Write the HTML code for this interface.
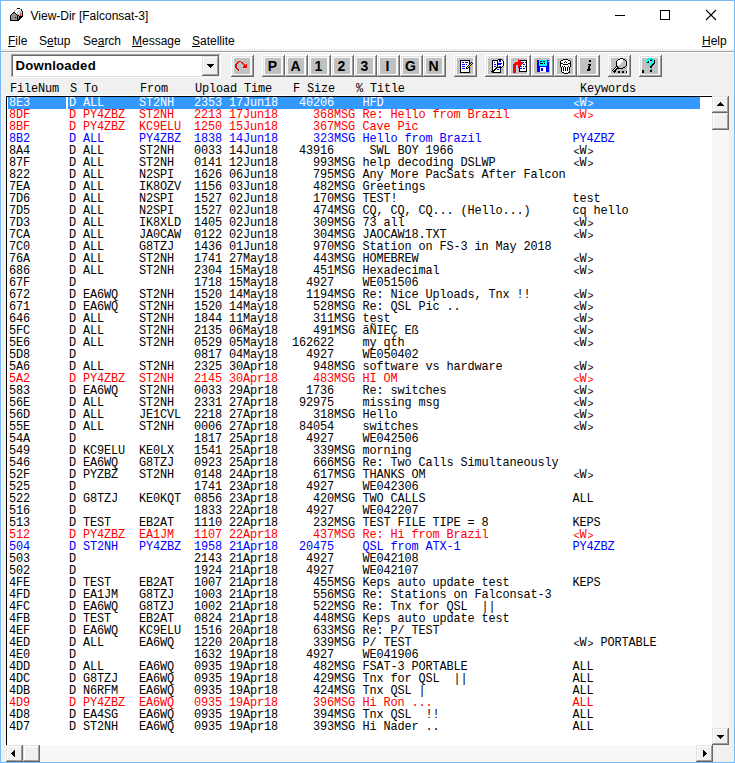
<!DOCTYPE html><html><head><meta charset="utf-8"><style>
*{box-sizing:border-box}
body{margin:0;width:735px;height:763px;position:relative;overflow:hidden;background:#F0F0F0;font-family:"Liberation Sans",sans-serif}
.a{position:absolute}
.mono{font-family:"Liberation Mono",monospace;font-size:11.9px;letter-spacing:-0.14px;line-height:12px;white-space:pre}
.row{position:absolute;left:0;width:705px;height:12px}
.row span{position:absolute;top:0}
.K{color:#000}.R{color:#FF0000}.B{color:#0000FF}
.S{color:#fff}
.ab{font-style:normal;display:inline-block;width:7px;font-size:10px;vertical-align:0px;letter-spacing:0;text-align:center;position:relative;left:0.5px;top:1px}
.menu{position:absolute;top:34px;font-size:12px;line-height:15px;color:#000}
.menu u{text-decoration:underline;text-decoration-thickness:1px;text-underline-offset:1px}
.tb{position:absolute;top:55px;width:23px;height:22px}
.tbl{position:absolute;left:0;top:0;width:21px;height:22px;text-align:center;font:bold 14px/22px "Liberation Sans",sans-serif;color:#000}
.dither{background-color:#F0F0F0;background-image:conic-gradient(#fff 25%,#F0F0F0 0 50%,#fff 0 75%,#F0F0F0 0);background-size:2px 2px}
</style></head><body><div class="a" style="left:0;top:0;width:735px;height:49px;background:#fff"></div>
<div class="a" style="left:1px;top:51px;width:733px;height:1px;background:#A0A0A0"></div>
<div class="a" style="left:1px;top:52px;width:733px;height:1px;background:#fff"></div>
<div class="a" style="left:0;top:0;width:735px;height:763px;border:1px solid #7BB8F8"></div>
<div class="a" style="left:30.5px;top:9px;font-size:12px;line-height:15px;color:#000;white-space:pre">View-Dir [Falconsat-3]</div>
<svg class="a" style="left:8px;top:6px" width="18" height="18" shape-rendering="crispEdges"><path fill="#000" d="M9 2h3v1h-3z"/><path fill="#A8A8A8" d="M8 3h1v1h-1z"/><path fill="#fff" d="M9 3h3v1h-3z"/><path fill="#C0C0C0" d="M12 3h1v1h-1z"/><path fill="#000" d="M13 3h1v1h-1z"/><path fill="#A8A8A8" d="M7 4h1v1h-1z"/><path fill="#fff" d="M8 4h3v1h-3z"/><path fill="#C0C0C0" d="M11 4h1v1h-1z"/><path fill="#fff" d="M12 4h1v1h-1z"/><path fill="#000" d="M13 4h1v1h-1z"/><path fill="#A8A8A8" d="M6 5h1v1h-1z"/><path fill="#fff" d="M7 5h3v1h-3z"/><path fill="#C0C0C0" d="M10 5h1v1h-1z"/><path fill="#fff" d="M11 5h1v1h-1z"/><path fill="#C0C0C0" d="M12 5h2v1h-2z"/><path fill="#000" d="M14 5h1v1h-1zM5 6h2v1h-2z"/><path fill="#fff" d="M7 6h2v1h-2z"/><path fill="#C0C0C0" d="M9 6h1v1h-1z"/><path fill="#fff" d="M10 6h1v1h-1z"/><path fill="#C0C0C0" d="M11 6h3v1h-3z"/><path fill="#000" d="M14 6h1v1h-1zM4 7h1v1h-1z"/><path fill="#909090" d="M5 7h2v1h-2z"/><path fill="#000" d="M7 7h1v1h-1z"/><path fill="#fff" d="M8 7h1v1h-1z"/><path fill="#C0C0C0" d="M9 7h1v1h-1z"/><path fill="#fff" d="M10 7h2v1h-2z"/><path fill="#00A0A0" d="M12 7h1v1h-1z"/><path fill="#C0C0C0" d="M13 7h1v1h-1z"/><path fill="#000" d="M14 7h1v1h-1zM3 8h1v1h-1z"/><path fill="#909090" d="M4 8h4v1h-4z"/><path fill="#000" d="M8 8h1v1h-1z"/><path fill="#C0C0C0" d="M9 8h2v1h-2zM11 8h1v1h-1z"/><path fill="#f00" d="M12 8h1v1h-1z"/><path fill="#C0C0C0" d="M13 8h1v1h-1z"/><path fill="#000" d="M14 8h1v1h-1zM2 9h1v1h-1z"/><path fill="#909090" d="M3 9h6v1h-6z"/><path fill="#000" d="M9 9h2v1h-2z"/><path fill="#C0C0C0" d="M11 9h1v1h-1z"/><path fill="#f00" d="M12 9h1v1h-1z"/><path fill="#C0C0C0" d="M13 9h1v1h-1z"/><path fill="#000" d="M14 9h1v1h-1zM2 10h1v1h-1z"/><path fill="#909090" d="M3 10h6v1h-6z"/><path fill="#000" d="M9 10h1v1h-1z"/><path fill="#909090" d="M10 10h1v1h-1z"/><path fill="#000" d="M11 10h1v1h-1zM12 10h3v1h-3zM2 11h1v1h-1z"/><path fill="#909090" d="M3 11h4v1h-4z"/><path fill="#000" d="M7 11h1v1h-1z"/><path fill="#909090" d="M8 11h1v1h-1z"/><path fill="#000" d="M9 11h1v1h-1z"/><path fill="#909090" d="M10 11h1v1h-1z"/><path fill="#000" d="M11 11h3v1h-3zM2 12h1v1h-1z"/><path fill="#909090" d="M3 12h6v1h-6z"/><path fill="#000" d="M9 12h1v1h-1z"/><path fill="#909090" d="M10 12h1v1h-1z"/><path fill="#000" d="M11 12h2v1h-2zM2 13h1v1h-1z"/><path fill="#909090" d="M3 13h6v1h-6z"/><path fill="#000" d="M9 13h3v1h-3zM2 14h9v1h-9z"/></svg>
<div class="a" style="left:615px;top:15px;width:10px;height:1px;background:#000"></div>
<div class="a" style="left:660px;top:10px;width:10px;height:10px;border:1px solid #000"></div>
<svg class="a" style="left:705px;top:9px" width="12" height="12" viewBox="0 0 12 12"><path d="M1 1L11 11M11 1L1 11" stroke="#000" stroke-width="1.1"/></svg>
<div class="menu" style="left:8px"><u>F</u>ile</div>
<div class="menu" style="left:39px">S<u>e</u>tup</div>
<div class="menu" style="left:83px">Se<u>a</u>rch</div>
<div class="menu" style="left:132px"><u>M</u>essage</div>
<div class="menu" style="left:192px"><u>S</u>atellite</div>
<div class="menu" style="left:702px"><u>H</u>elp</div>
<div class="a" style="left:11px;top:54px;width:210px;height:24px;background:#fff"></div>
<div class="a" style="left:11px;top:54px;width:209px;height:23px;background:#A0A0A0"></div>
<div class="a" style="left:12px;top:55px;width:208px;height:22px;background:#E3E3E3"></div>
<div class="a" style="left:12px;top:55px;width:207px;height:21px;background:#696969"></div>
<div class="a" style="left:13px;top:56px;width:206px;height:20px;background:#fff"></div>
<div style="position:absolute;left:202px;top:56px;width:17px;height:20px;background:#696969"><div style="position:absolute;left:0;top:0;width:16px;height:19px;background:#E3E3E3"></div><div style="position:absolute;left:1px;top:1px;width:15px;height:18px;background:#A0A0A0"></div><div style="position:absolute;left:1px;top:1px;width:14px;height:17px;background:#FFFFFF"></div><div style="position:absolute;left:2px;top:2px;width:13px;height:16px;background:#F0F0F0"></div></div>
<svg class="a" style="left:207px;top:64px" width="7" height="4" shape-rendering="crispEdges"><path d="M0 0h7v1H0zM1 1h5v1H1zM2 2h3v1H2zM3 3h1v1H3z"/></svg>
<div class="a" style="left:15.5px;top:58px;font:bold 13.2px/16px 'Liberation Sans',sans-serif;letter-spacing:0.2px;color:#000">Downloaded</div>
<div class="tb" style="left:231px"><div class="a" style="left:0px;top:0px;width:23px;height:22px;background:#696969"></div><div class="a" style="left:0px;top:0px;width:22px;height:21px;background:#FFFFFF"></div><div class="a" style="left:1px;top:1px;width:21px;height:20px;background:#A0A0A0"></div><div class="a" style="left:1px;top:1px;width:20px;height:19px;background:#E3E3E3"></div><div class="a" style="left:2px;top:2px;width:19px;height:18px;background:#F8F8F8"></div><div class="a" style="left:3px;top:3px;width:16px;height:16px;background:#C0C0C0"></div><svg class="a" style="left:0px;top:0px" width="23" height="22" shape-rendering="crispEdges"><path fill="#f00" d="M7 6h3v1h-3zM6 7h2v1h-2zM10 7h2v1h-2zM5 8h2v1h-2zM11 8h2v1h-2zM4 9h2v1h-2zM12 9h2v1h-2zM15 9h1v1h-1zM4 10h2v1h-2zM13 10h3v1h-3zM4 11h2v1h-2zM12 11h4v1h-4zM4 12h2v1h-2zM12 12h4v1h-4zM5 13h2v1h-2zM6 14h2v1h-2zM7 15h1v1h-1z"/><path fill="#B4D6D6" d="M7 5h3v1h-3zM6 6h1v1h-1zM10 6h1v1h-1zM5 7h1v1h-1zM8 7h2v1h-2zM12 7h1v1h-1zM4 8h1v1h-1zM7 8h1v1h-1zM10 8h1v1h-1zM13 8h1v1h-1zM3 9h1v1h-1zM6 9h1v1h-1zM11 9h1v1h-1zM14 9h1v1h-1zM16 9h1v1h-1zM3 10h1v1h-1zM6 10h1v1h-1zM12 10h1v1h-1zM16 10h1v1h-1zM3 11h1v1h-1zM6 11h1v1h-1zM16 11h1v1h-1zM3 12h1v1h-1zM6 12h1v1h-1zM16 12h1v1h-1zM4 13h1v1h-1zM7 13h1v1h-1zM12 13h4v1h-4zM5 14h1v1h-1zM8 14h1v1h-1zM6 15h1v1h-1zM8 15h1v1h-1zM7 16h1v1h-1z"/></svg></div>
<div class="tb" style="left:262px"><div class="a" style="left:0px;top:0px;width:23px;height:22px;background:#696969"></div><div class="a" style="left:0px;top:0px;width:22px;height:21px;background:#FFFFFF"></div><div class="a" style="left:1px;top:1px;width:21px;height:20px;background:#A0A0A0"></div><div class="a" style="left:1px;top:1px;width:20px;height:19px;background:#E3E3E3"></div><div class="a" style="left:2px;top:2px;width:19px;height:18px;background:#F8F8F8"></div><div class="a" style="left:3px;top:3px;width:16px;height:16px;background:#C0C0C0"></div><div class="tbl">P</div></div>
<div class="tb" style="left:285px"><div class="a" style="left:0px;top:0px;width:23px;height:22px;background:#696969"></div><div class="a" style="left:0px;top:0px;width:22px;height:21px;background:#FFFFFF"></div><div class="a" style="left:1px;top:1px;width:21px;height:20px;background:#A0A0A0"></div><div class="a" style="left:1px;top:1px;width:20px;height:19px;background:#E3E3E3"></div><div class="a" style="left:2px;top:2px;width:19px;height:18px;background:#F8F8F8"></div><div class="a" style="left:3px;top:3px;width:16px;height:16px;background:#C0C0C0"></div><div class="tbl">A</div></div>
<div class="tb" style="left:308px"><div class="a" style="left:0px;top:0px;width:23px;height:22px;background:#696969"></div><div class="a" style="left:0px;top:0px;width:22px;height:21px;background:#FFFFFF"></div><div class="a" style="left:1px;top:1px;width:21px;height:20px;background:#A0A0A0"></div><div class="a" style="left:1px;top:1px;width:20px;height:19px;background:#E3E3E3"></div><div class="a" style="left:2px;top:2px;width:19px;height:18px;background:#F8F8F8"></div><div class="a" style="left:3px;top:3px;width:16px;height:16px;background:#C0C0C0"></div><div class="tbl">1</div></div>
<div class="tb" style="left:331px"><div class="a" style="left:0px;top:0px;width:23px;height:22px;background:#696969"></div><div class="a" style="left:0px;top:0px;width:22px;height:21px;background:#FFFFFF"></div><div class="a" style="left:1px;top:1px;width:21px;height:20px;background:#A0A0A0"></div><div class="a" style="left:1px;top:1px;width:20px;height:19px;background:#E3E3E3"></div><div class="a" style="left:2px;top:2px;width:19px;height:18px;background:#F8F8F8"></div><div class="a" style="left:3px;top:3px;width:16px;height:16px;background:#C0C0C0"></div><div class="tbl">2</div></div>
<div class="tb" style="left:354px"><div class="a" style="left:0px;top:0px;width:23px;height:22px;background:#696969"></div><div class="a" style="left:0px;top:0px;width:22px;height:21px;background:#FFFFFF"></div><div class="a" style="left:1px;top:1px;width:21px;height:20px;background:#A0A0A0"></div><div class="a" style="left:1px;top:1px;width:20px;height:19px;background:#E3E3E3"></div><div class="a" style="left:2px;top:2px;width:19px;height:18px;background:#F8F8F8"></div><div class="a" style="left:3px;top:3px;width:16px;height:16px;background:#C0C0C0"></div><div class="tbl">3</div></div>
<div class="tb" style="left:377px"><div class="a" style="left:0px;top:0px;width:23px;height:22px;background:#696969"></div><div class="a" style="left:0px;top:0px;width:22px;height:21px;background:#FFFFFF"></div><div class="a" style="left:1px;top:1px;width:21px;height:20px;background:#A0A0A0"></div><div class="a" style="left:1px;top:1px;width:20px;height:19px;background:#E3E3E3"></div><div class="a" style="left:2px;top:2px;width:19px;height:18px;background:#F8F8F8"></div><div class="a" style="left:3px;top:3px;width:16px;height:16px;background:#C0C0C0"></div><div class="tbl">I</div></div>
<div class="tb" style="left:400px"><div class="a" style="left:0px;top:0px;width:23px;height:22px;background:#696969"></div><div class="a" style="left:0px;top:0px;width:22px;height:21px;background:#FFFFFF"></div><div class="a" style="left:1px;top:1px;width:21px;height:20px;background:#A0A0A0"></div><div class="a" style="left:1px;top:1px;width:20px;height:19px;background:#E3E3E3"></div><div class="a" style="left:2px;top:2px;width:19px;height:18px;background:#F8F8F8"></div><div class="a" style="left:3px;top:3px;width:16px;height:16px;background:#C0C0C0"></div><div class="tbl">G</div></div>
<div class="tb" style="left:423px"><div class="a" style="left:0px;top:0px;width:23px;height:22px;background:#696969"></div><div class="a" style="left:0px;top:0px;width:22px;height:21px;background:#FFFFFF"></div><div class="a" style="left:1px;top:1px;width:21px;height:20px;background:#A0A0A0"></div><div class="a" style="left:1px;top:1px;width:20px;height:19px;background:#E3E3E3"></div><div class="a" style="left:2px;top:2px;width:19px;height:18px;background:#F8F8F8"></div><div class="a" style="left:3px;top:3px;width:16px;height:16px;background:#C0C0C0"></div><div class="tbl">N</div></div>
<div class="tb" style="left:454px"><div class="a" style="left:0px;top:0px;width:23px;height:22px;background:#696969"></div><div class="a" style="left:0px;top:0px;width:22px;height:21px;background:#FFFFFF"></div><div class="a" style="left:1px;top:1px;width:21px;height:20px;background:#A0A0A0"></div><div class="a" style="left:1px;top:1px;width:20px;height:19px;background:#E3E3E3"></div><div class="a" style="left:2px;top:2px;width:19px;height:18px;background:#F8F8F8"></div><div class="a" style="left:3px;top:3px;width:16px;height:16px;background:#C0C0C0"></div><svg class="a" style="left:0px;top:0px" width="23" height="22" shape-rendering="crispEdges"><path fill="#000" d="M6 5h10v1h-10zM6 6h1v11h-1z"/><path fill="#fff" d="M7 6h8v11h-8z"/><path fill="#000" d="M15 6h1v11h-1zM6 17h10v1h-10z"/><path fill="#00f" d="M8 7h2v1h-2zM11 7h3v1h-3zM8 9h3v1h-3zM12 9h1v1h-1zM8 11h3v1h-3zM8 13h3v1h-3z"/><path fill="#000" d="M17 7h1v1h-1zM16 8h1v1h-1z"/><path fill="#ff0" d="M17 8h1v1h-1z"/><path fill="#000" d="M18 8h1v1h-1zM15 9h1v1h-1z"/><path fill="#ff0" d="M16 9h1v1h-1z"/><path fill="#000" d="M17 9h1v1h-1zM14 10h1v1h-1z"/><path fill="#ff0" d="M15 10h1v1h-1z"/><path fill="#000" d="M16 10h1v1h-1zM13 11h1v1h-1z"/><path fill="#ff0" d="M14 11h1v1h-1z"/><path fill="#000" d="M15 11h1v1h-1zM12 12h1v1h-1z"/><path fill="#ff0" d="M13 12h1v1h-1z"/><path fill="#000" d="M14 12h1v1h-1zM12 13h2v1h-2z"/></svg></div>
<div class="tb" style="left:485px"><div class="a" style="left:0px;top:0px;width:23px;height:22px;background:#696969"></div><div class="a" style="left:0px;top:0px;width:22px;height:21px;background:#FFFFFF"></div><div class="a" style="left:1px;top:1px;width:21px;height:20px;background:#A0A0A0"></div><div class="a" style="left:1px;top:1px;width:20px;height:19px;background:#E3E3E3"></div><div class="a" style="left:2px;top:2px;width:19px;height:18px;background:#F8F8F8"></div><div class="a" style="left:3px;top:3px;width:16px;height:16px;background:#C0C0C0"></div><svg class="a" style="left:0px;top:0px" width="23" height="22" shape-rendering="crispEdges"><path fill="#000" d="M13 4h4v1h-4zM7 5h6v1h-6z"/><path fill="#fff" d="M13 5h1v1h-1z"/><path fill="#00f" d="M14 5h2v1h-2z"/><path fill="#fff" d="M16 5h1v1h-1z"/><path fill="#000" d="M17 5h1v1h-1zM7 6h1v1h-1z"/><path fill="#fff" d="M8 6h4v1h-4z"/><path fill="#000" d="M12 6h1v1h-1z"/><path fill="#fff" d="M13 6h1v1h-1z"/><path fill="#00f" d="M14 6h2v1h-2z"/><path fill="#fff" d="M16 6h2v1h-2z"/><path fill="#000" d="M18 6h1v1h-1zM7 7h1v1h-1z"/><path fill="#fff" d="M8 7h1v1h-1z"/><path fill="#00f" d="M9 7h1v1h-1z"/><path fill="#fff" d="M10 7h2v1h-2z"/><path fill="#000" d="M12 7h1v1h-1z"/><path fill="#fff" d="M13 7h5v1h-5z"/><path fill="#000" d="M18 7h1v1h-1zM7 8h1v1h-1z"/><path fill="#fff" d="M8 8h4v1h-4z"/><path fill="#000" d="M12 8h1v1h-1z"/><path fill="#00f" d="M13 8h4v1h-4z"/><path fill="#fff" d="M17 8h1v1h-1z"/><path fill="#000" d="M18 8h1v1h-1zM7 9h1v1h-1z"/><path fill="#fff" d="M8 9h1v1h-1z"/><path fill="#00f" d="M9 9h2v1h-2z"/><path fill="#fff" d="M11 9h1v1h-1z"/><path fill="#000" d="M12 9h1v1h-1z"/><path fill="#00f" d="M13 9h3v1h-3z"/><path fill="#fff" d="M16 9h2v1h-2z"/><path fill="#000" d="M18 9h1v1h-1zM7 10h1v1h-1z"/><path fill="#fff" d="M8 10h4v1h-4z"/><path fill="#000" d="M12 10h1v1h-1z"/><path fill="#fff" d="M13 10h5v1h-5z"/><path fill="#000" d="M18 10h1v1h-1zM7 11h1v1h-1z"/><path fill="#fff" d="M8 11h1v1h-1z"/><path fill="#00f" d="M9 11h2v1h-2z"/><path fill="#fff" d="M11 11h1v1h-1z"/><path fill="#000" d="M12 11h1v1h-1z"/><path fill="#fff" d="M13 11h1v1h-1z"/><path fill="#00f" d="M14 11h2v1h-2z"/><path fill="#fff" d="M16 11h1v1h-1z"/><path fill="#000" d="M17 11h1v1h-1zM7 12h1v1h-1z"/><path fill="#fff" d="M8 12h3v1h-3z"/><path fill="#000" d="M11 12h2v1h-2zM13 12h4v1h-4zM7 13h1v1h-1z"/><path fill="#fff" d="M8 13h2v1h-2z"/><path fill="#000" d="M10 13h2v1h-2z"/><path fill="#fff" d="M12 13h1v1h-1zM13 13h2v1h-2z"/><path fill="#000" d="M15 13h1v1h-1zM7 14h1v1h-1z"/><path fill="#fff" d="M8 14h1v1h-1z"/><path fill="#000" d="M9 14h2v1h-2z"/><path fill="#fff" d="M11 14h1v1h-1z"/><path fill="#00f" d="M12 14h2v1h-2z"/><path fill="#fff" d="M14 14h1v1h-1z"/><path fill="#000" d="M15 14h1v1h-1zM7 15h1v1h-1zM8 15h2v1h-2z"/><path fill="#fff" d="M10 15h5v1h-5z"/><path fill="#000" d="M15 15h1v1h-1zM6 16h3v1h-3z"/><path fill="#fff" d="M9 16h6v1h-6z"/><path fill="#000" d="M15 16h1v1h-1zM7 17h9v1h-9z"/></svg></div>
<div class="tb" style="left:508px"><div class="a" style="left:0px;top:0px;width:23px;height:22px;background:#696969"></div><div class="a" style="left:0px;top:0px;width:22px;height:21px;background:#FFFFFF"></div><div class="a" style="left:1px;top:1px;width:21px;height:20px;background:#A0A0A0"></div><div class="a" style="left:1px;top:1px;width:20px;height:19px;background:#E3E3E3"></div><div class="a" style="left:2px;top:2px;width:19px;height:18px;background:#F8F8F8"></div><div class="a" style="left:3px;top:3px;width:16px;height:16px;background:#C0C0C0"></div><svg class="a" style="left:0px;top:0px" width="23" height="22" shape-rendering="crispEdges"><path fill="#000" d="M11 5h8v1h-8zM11 6h1v10h-1z"/><path fill="#fff" d="M12 6h6v10h-6z"/><path fill="#000" d="M18 6h1v10h-1zM11 16h8v1h-8z"/><path fill="#00f" d="M14 7h2v1h-2zM17 7h1v1h-1zM15 9h2v1h-2zM12 11h2v1h-2zM15 11h1v1h-1zM17 11h1v1h-1zM12 13h2v1h-2zM15 13h2v1h-2z"/><path fill="#f00" d="M10 4h1v1h-1zM10 5h2v1h-2zM10 6h3v1h-3zM7 7h7v1h-7zM6 8h9v1h-9zM5 9h9v1h-9zM5 10h3v1h-3zM10 10h3v1h-3zM5 11h3v1h-3zM10 11h2v1h-2zM5 12h3v1h-3zM10 12h1v1h-1zM5 13h3v5h-3z"/><path fill="#B4D6D6" d="M10 3h1v1h-1zM9 4h1v1h-1zM11 4h1v1h-1zM6 6h4v1h-4zM5 7h2v1h-2zM4 8h2v1h-2zM4 9h1v9h-1zM8 10h1v8h-1z"/></svg></div>
<div class="tb" style="left:531px"><div class="a" style="left:0px;top:0px;width:23px;height:22px;background:#696969"></div><div class="a" style="left:0px;top:0px;width:22px;height:21px;background:#FFFFFF"></div><div class="a" style="left:1px;top:1px;width:21px;height:20px;background:#A0A0A0"></div><div class="a" style="left:1px;top:1px;width:20px;height:19px;background:#E3E3E3"></div><div class="a" style="left:2px;top:2px;width:19px;height:18px;background:#F8F8F8"></div><div class="a" style="left:3px;top:3px;width:16px;height:16px;background:#C0C0C0"></div><svg class="a" style="left:0px;top:0px" width="23" height="22" shape-rendering="crispEdges"><path fill="#00f" d="M6 5h12v12h-12z"/><path fill="#0ff" d="M8 5h8v6h-8z"/><path fill="#000" d="M9 6h2v1h-2zM12 6h2v1h-2z"/><path fill="#C0C0C0" d="M17 6h1v1h-1z"/><path fill="#000" d="M9 8h3v1h-3zM13 8h1v1h-1z"/><path fill="#fff" d="M9 12h6v5h-6z"/><path fill="#00f" d="M10 13h2v3h-2z"/></svg></div>
<div class="tb" style="left:554px"><div class="a" style="left:0px;top:0px;width:23px;height:22px;background:#696969"></div><div class="a" style="left:0px;top:0px;width:22px;height:21px;background:#FFFFFF"></div><div class="a" style="left:1px;top:1px;width:21px;height:20px;background:#A0A0A0"></div><div class="a" style="left:1px;top:1px;width:20px;height:19px;background:#E3E3E3"></div><div class="a" style="left:2px;top:2px;width:19px;height:18px;background:#F8F8F8"></div><div class="a" style="left:3px;top:3px;width:16px;height:16px;background:#C0C0C0"></div><svg class="a" style="left:0px;top:0px" width="23" height="22" shape-rendering="crispEdges"><path fill="#000" d="M9 4h5v1h-5zM7 5h2v1h-2z"/><path fill="#fff" d="M9 5h5v1h-5z"/><path fill="#000" d="M14 5h2v1h-2zM6 6h1v1h-1z"/><path fill="#fff" d="M7 6h4v1h-4z"/><path fill="#000" d="M11 6h1v1h-1z"/><path fill="#fff" d="M12 6h4v1h-4z"/><path fill="#000" d="M16 6h1v1h-1zM6 7h1v1h-1z"/><path fill="#fff" d="M7 7h3v1h-3z"/><path fill="#000" d="M10 7h1v1h-1z"/><path fill="#fff" d="M11 7h1v1h-1z"/><path fill="#000" d="M12 7h1v1h-1z"/><path fill="#fff" d="M13 7h3v1h-3z"/><path fill="#000" d="M16 7h1v1h-1zM6 8h3v1h-3z"/><path fill="#fff" d="M9 8h5v1h-5z"/><path fill="#000" d="M14 8h3v1h-3zM6 9h1v1h-1z"/><path fill="#fff" d="M7 9h2v1h-2z"/><path fill="#000" d="M9 9h5v1h-5z"/><path fill="#fff" d="M14 9h2v1h-2z"/><path fill="#000" d="M16 9h1v1h-1zM6 10h1v1h-1z"/><path fill="#fff" d="M7 10h9v1h-9z"/><path fill="#000" d="M16 10h1v1h-1zM6 11h1v1h-1z"/><path fill="#fff" d="M7 11h1v1h-1z"/><path fill="#000" d="M8 11h1v1h-1z"/><path fill="#fff" d="M9 11h1v1h-1z"/><path fill="#000" d="M10 11h1v1h-1z"/><path fill="#fff" d="M11 11h3v1h-3z"/><path fill="#000" d="M14 11h1v1h-1z"/><path fill="#fff" d="M15 11h1v1h-1z"/><path fill="#000" d="M16 11h1v1h-1zM7 12h1v4h-1z"/><path fill="#fff" d="M8 12h1v4h-1z"/><path fill="#000" d="M9 12h1v4h-1z"/><path fill="#fff" d="M10 12h1v4h-1z"/><path fill="#000" d="M11 12h1v4h-1z"/><path fill="#fff" d="M12 12h1v4h-1z"/><path fill="#000" d="M13 12h1v4h-1z"/><path fill="#fff" d="M14 12h1v4h-1z"/><path fill="#000" d="M15 12h1v4h-1zM7 16h1v1h-1z"/><path fill="#fff" d="M8 16h7v1h-7z"/><path fill="#000" d="M15 16h1v1h-1zM8 17h2v1h-2z"/><path fill="#fff" d="M10 17h4v1h-4z"/><path fill="#000" d="M14 17h2v1h-2zM10 18h4v1h-4z"/></svg></div>
<div class="tb" style="left:577px"><div class="a" style="left:0px;top:0px;width:23px;height:22px;background:#696969"></div><div class="a" style="left:0px;top:0px;width:22px;height:21px;background:#FFFFFF"></div><div class="a" style="left:1px;top:1px;width:21px;height:20px;background:#A0A0A0"></div><div class="a" style="left:1px;top:1px;width:20px;height:19px;background:#E3E3E3"></div><div class="a" style="left:2px;top:2px;width:19px;height:18px;background:#F8F8F8"></div><div class="a" style="left:3px;top:3px;width:16px;height:16px;background:#C0C0C0"></div><svg class="a" style="left:0px;top:0px" width="23" height="22" shape-rendering="crispEdges"><path fill="#000" d="M12 5h2v2h-2zM11 9h3v1h-3zM12 10h2v1h-2zM11 11h2v3h-2zM10 14h4v1h-4zM10 15h3v1h-3z"/></svg></div>
<div class="tb" style="left:608px"><div class="a" style="left:0px;top:0px;width:23px;height:22px;background:#696969"></div><div class="a" style="left:0px;top:0px;width:22px;height:21px;background:#FFFFFF"></div><div class="a" style="left:1px;top:1px;width:21px;height:20px;background:#A0A0A0"></div><div class="a" style="left:1px;top:1px;width:20px;height:19px;background:#E3E3E3"></div><div class="a" style="left:2px;top:2px;width:19px;height:18px;background:#F8F8F8"></div><div class="a" style="left:3px;top:3px;width:16px;height:16px;background:#C0C0C0"></div><svg class="a" style="left:0px;top:0px" width="23" height="22" shape-rendering="crispEdges"><path fill="#000" d="M12 3h3v1h-3zM10 4h2v1h-2z"/><path fill="#fff" d="M12 4h3v1h-3z"/><path fill="#000" d="M15 4h2v1h-2zM9 5h1v1h-1z"/><path fill="#fff" d="M10 5h5v1h-5z"/><path fill="#C0C0C0" d="M15 5h2v1h-2z"/><path fill="#000" d="M17 5h1v1h-1zM8 6h1v1h-1z"/><path fill="#fff" d="M9 6h6v1h-6z"/><path fill="#C0C0C0" d="M15 6h3v1h-3z"/><path fill="#000" d="M18 6h1v1h-1zM8 7h1v1h-1z"/><path fill="#fff" d="M9 7h5v1h-5z"/><path fill="#C0C0C0" d="M14 7h4v1h-4z"/><path fill="#000" d="M18 7h1v1h-1zM8 8h1v1h-1z"/><path fill="#fff" d="M9 8h4v1h-4z"/><path fill="#C0C0C0" d="M13 8h5v1h-5z"/><path fill="#000" d="M18 8h1v1h-1zM8 9h1v1h-1z"/><path fill="#fff" d="M9 9h3v1h-3z"/><path fill="#C0C0C0" d="M12 9h6v1h-6z"/><path fill="#000" d="M18 9h1v1h-1zM8 10h1v1h-1z"/><path fill="#C0C0C0" d="M9 10h9v1h-9z"/><path fill="#000" d="M18 10h1v1h-1zM8 11h2v1h-2z"/><path fill="#C0C0C0" d="M10 11h7v1h-7z"/><path fill="#000" d="M17 11h1v1h-1zM7 12h1v1h-1z"/><path fill="#fff" d="M8 12h1v1h-1z"/><path fill="#000" d="M9 12h2v1h-2z"/><path fill="#C0C0C0" d="M11 12h4v1h-4z"/><path fill="#000" d="M15 12h2v1h-2zM6 13h1v1h-1z"/><path fill="#fff" d="M7 13h1v1h-1z"/><path fill="#000" d="M8 13h2v1h-2zM10 13h5v1h-5zM5 14h1v1h-1z"/><path fill="#fff" d="M6 14h1v1h-1z"/><path fill="#000" d="M7 14h2v1h-2zM4 15h1v1h-1z"/><path fill="#fff" d="M5 15h1v1h-1z"/><path fill="#000" d="M6 15h2v1h-2zM5 16h3v1h-3zM10 16h2v1h-2zM14 16h2v1h-2zM18 16h1v1h-1zM6 17h1v1h-1zM10 17h2v1h-2zM14 17h2v1h-2zM18 17h1v1h-1z"/></svg></div>
<div class="tb" style="left:639px"><div class="a" style="left:0px;top:0px;width:23px;height:22px;background:#696969"></div><div class="a" style="left:0px;top:0px;width:22px;height:21px;background:#FFFFFF"></div><div class="a" style="left:1px;top:1px;width:21px;height:20px;background:#A0A0A0"></div><div class="a" style="left:1px;top:1px;width:20px;height:19px;background:#E3E3E3"></div><div class="a" style="left:2px;top:2px;width:19px;height:18px;background:#F8F8F8"></div><div class="a" style="left:3px;top:3px;width:16px;height:16px;background:#C0C0C0"></div><svg class="a" style="left:0px;top:0px" width="23" height="22" shape-rendering="crispEdges"><path fill="#0ff" d="M9 3h5v1h-5zM8 4h3v1h-3z"/><path fill="#00A0A0" d="M11 4h3v1h-3z"/><path fill="#0ff" d="M14 4h1v1h-1zM7 5h3v1h-3z"/><path fill="#B4D6D6" d="M10 5h1v1h-1z"/><path fill="#000" d="M11 5h2v1h-2z"/><path fill="#0ff" d="M13 5h2v1h-2z"/><path fill="#000" d="M15 5h1v1h-1z"/><path fill="#0ff" d="M7 6h2v1h-2z"/><path fill="#000" d="M9 6h1v1h-1z"/><path fill="#0ff" d="M13 6h2v1h-2z"/><path fill="#000" d="M15 6h1v1h-1z"/><path fill="#0ff" d="M7 7h1v1h-1z"/><path fill="#000" d="M8 7h2v1h-2z"/><path fill="#0ff" d="M12 7h3v1h-3z"/><path fill="#000" d="M15 7h1v1h-1z"/><path fill="#0ff" d="M11 8h3v1h-3z"/><path fill="#000" d="M14 8h2v1h-2z"/><path fill="#0ff" d="M10 9h3v1h-3z"/><path fill="#000" d="M13 9h2v1h-2z"/><path fill="#0ff" d="M10 10h2v1h-2z"/><path fill="#000" d="M12 10h2v1h-2z"/><path fill="#0ff" d="M10 11h1v1h-1z"/><path fill="#000" d="M11 11h2v1h-2zM11 12h2v1h-2z"/><path fill="#0ff" d="M10 14h2v1h-2z"/><path fill="#00A0A0" d="M12 14h1v1h-1z"/><path fill="#0ff" d="M10 15h1v1h-1z"/><path fill="#000" d="M11 15h2v1h-2zM11 16h2v1h-2zM3 15h2v3h-2z"/></svg></div>
<div class="a mono" style="left:10px;top:83px;color:#000">FileNum</div>
<div class="a mono" style="left:70px;top:83px;color:#000">S To</div>
<div class="a mono" style="left:140px;top:83px;color:#000">From</div>
<div class="a mono" style="left:195px;top:83px;color:#000">Upload Time   F Size   % Title</div>
<div class="a mono" style="left:580px;top:83px;color:#000">Keywords</div>
<div class="a" style="left:5px;top:95px;width:1px;height:667px;background:#F7F7F7"></div>
<div class="a" style="left:5px;top:95px;width:707px;height:1px;background:#fff"></div>
<div class="a" style="left:6px;top:96px;width:706px;height:649px;background:#000"></div>
<div class="a" style="left:7px;top:97px;width:705px;height:648px;background:#fff;overflow:hidden">
<div class="a" style="left:1px;top:0;width:58px;height:12px;background:#3399FF"></div>
<div class="a" style="left:61px;top:0;width:632px;height:12px;background:#3399FF"></div>
<div class="row mono S" style="top:0px"><span style="left:2px">8E3</span><span style="left:62px">D ALL</span><span style="left:132px">ST2NH</span><span style="left:187px">2353 17Jun18   40206   </span><span style="left:355.5px">HFD</span><span style="left:565.5px"><i class="ab">&lt;</i>W<i class="ab">&gt;</i></span></div>
<div class="row mono R" style="top:12px"><span style="left:2px">8DF</span><span style="left:62px">D PY4ZBZ</span><span style="left:132px">ST2NH</span><span style="left:187px">2213 17Jun18     368MSG</span><span style="left:355.5px">Re: Hello from Brazil</span><span style="left:565.5px"><i class="ab">&lt;</i>W<i class="ab">&gt;</i></span></div>
<div class="row mono R" style="top:24px"><span style="left:2px">8BF</span><span style="left:62px">D PY4ZBZ</span><span style="left:132px">KC9ELU</span><span style="left:187px">1250 15Jun18     367MSG</span><span style="left:355.5px">Cave Pic</span></div>
<div class="row mono B" style="top:36px"><span style="left:2px">8B2</span><span style="left:62px">D ALL</span><span style="left:132px">PY4ZBZ</span><span style="left:187px">1838 14Jun18     323MSG</span><span style="left:355.5px">Hello from Brazil</span><span style="left:565.5px">PY4ZBZ</span></div>
<div class="row mono K" style="top:48px"><span style="left:2px">8A4</span><span style="left:62px">D ALL</span><span style="left:132px">ST2NH</span><span style="left:187px">0033 14Jun18   43916   </span><span style="left:355.5px"> SWL BOY 1966</span><span style="left:565.5px"><i class="ab">&lt;</i>W<i class="ab">&gt;</i></span></div>
<div class="row mono K" style="top:60px"><span style="left:2px">87F</span><span style="left:62px">D ALL</span><span style="left:132px">ST2NH</span><span style="left:187px">0141 12Jun18     993MSG</span><span style="left:355.5px">help decoding DSLWP</span><span style="left:565.5px"><i class="ab">&lt;</i>W<i class="ab">&gt;</i></span></div>
<div class="row mono K" style="top:72px"><span style="left:2px">822</span><span style="left:62px">D ALL</span><span style="left:132px">N2SPI</span><span style="left:187px">1626 06Jun18     795MSG</span><span style="left:355.5px">Any More PacSats After Falcon</span></div>
<div class="row mono K" style="top:84px"><span style="left:2px">7EA</span><span style="left:62px">D ALL</span><span style="left:132px">IK8OZV</span><span style="left:187px">1156 03Jun18     482MSG</span><span style="left:355.5px">Greetings</span></div>
<div class="row mono K" style="top:96px"><span style="left:2px">7D6</span><span style="left:62px">D ALL</span><span style="left:132px">N2SPI</span><span style="left:187px">1527 02Jun18     170MSG</span><span style="left:355.5px">TEST!</span><span style="left:565.5px">test</span></div>
<div class="row mono K" style="top:108px"><span style="left:2px">7D5</span><span style="left:62px">D ALL</span><span style="left:132px">N2SPI</span><span style="left:187px">1527 02Jun18     474MSG</span><span style="left:355.5px">CQ, CQ, CQ... (Hello...)</span><span style="left:565.5px">cq hello</span></div>
<div class="row mono K" style="top:120px"><span style="left:2px">7D3</span><span style="left:62px">D ALL</span><span style="left:132px">IK8XLD</span><span style="left:187px">1405 02Jun18     309MSG</span><span style="left:355.5px">73 all</span><span style="left:565.5px"><i class="ab">&lt;</i>W<i class="ab">&gt;</i></span></div>
<div class="row mono K" style="top:132px"><span style="left:2px">7CA</span><span style="left:62px">D ALL</span><span style="left:132px">JA0CAW</span><span style="left:187px">0122 02Jun18     304MSG</span><span style="left:355.5px">JAOCAW18.TXT</span><span style="left:565.5px"><i class="ab">&lt;</i>W<i class="ab">&gt;</i></span></div>
<div class="row mono K" style="top:144px"><span style="left:2px">7C0</span><span style="left:62px">D ALL</span><span style="left:132px">G8TZJ</span><span style="left:187px">1436 01Jun18     970MSG</span><span style="left:355.5px">Station on FS-3 in May 2018</span></div>
<div class="row mono K" style="top:156px"><span style="left:2px">76A</span><span style="left:62px">D ALL</span><span style="left:132px">ST2NH</span><span style="left:187px">1741 27May18     443MSG</span><span style="left:355.5px">HOMEBREW</span><span style="left:565.5px"><i class="ab">&lt;</i>W<i class="ab">&gt;</i></span></div>
<div class="row mono K" style="top:168px"><span style="left:2px">686</span><span style="left:62px">D ALL</span><span style="left:132px">ST2NH</span><span style="left:187px">2304 15May18     451MSG</span><span style="left:355.5px">Hexadecimal</span><span style="left:565.5px"><i class="ab">&lt;</i>W<i class="ab">&gt;</i></span></div>
<div class="row mono K" style="top:180px"><span style="left:2px">67F</span><span style="left:62px">D </span><span style="left:132px"></span><span style="left:187px">1718 15May18    4927   </span><span style="left:355.5px">WE051506</span></div>
<div class="row mono K" style="top:192px"><span style="left:2px">672</span><span style="left:62px">D EA6WQ</span><span style="left:132px">ST2NH</span><span style="left:187px">1520 14May18    1194MSG</span><span style="left:355.5px">Re: Nice Uploads, Tnx !!</span><span style="left:565.5px"><i class="ab">&lt;</i>W<i class="ab">&gt;</i></span></div>
<div class="row mono K" style="top:204px"><span style="left:2px">671</span><span style="left:62px">D EA6WQ</span><span style="left:132px">ST2NH</span><span style="left:187px">1520 14May18     528MSG</span><span style="left:355.5px">Re: QSL Pic ..</span><span style="left:565.5px"><i class="ab">&lt;</i>W<i class="ab">&gt;</i></span></div>
<div class="row mono K" style="top:216px"><span style="left:2px">646</span><span style="left:62px">D ALL</span><span style="left:132px">ST2NH</span><span style="left:187px">1844 11May18     311MSG</span><span style="left:355.5px">test</span><span style="left:565.5px"><i class="ab">&lt;</i>W<i class="ab">&gt;</i></span></div>
<div class="row mono K" style="top:228px"><span style="left:2px">5FC</span><span style="left:62px">D ALL</span><span style="left:132px">ST2NH</span><span style="left:187px">2135 06May18     491MSG</span><span style="left:355.5px">ãÑIEÇ Eß</span><span style="left:565.5px"><i class="ab">&lt;</i>W<i class="ab">&gt;</i></span></div>
<div class="row mono K" style="top:240px"><span style="left:2px">5E6</span><span style="left:62px">D ALL</span><span style="left:132px">ST2NH</span><span style="left:187px">0529 05May18  162622   </span><span style="left:355.5px">my qth</span><span style="left:565.5px"><i class="ab">&lt;</i>W<i class="ab">&gt;</i></span></div>
<div class="row mono K" style="top:252px"><span style="left:2px">5D8</span><span style="left:62px">D </span><span style="left:132px"></span><span style="left:187px">0817 04May18    4927   </span><span style="left:355.5px">WE050402</span></div>
<div class="row mono K" style="top:264px"><span style="left:2px">5A6</span><span style="left:62px">D ALL</span><span style="left:132px">ST2NH</span><span style="left:187px">2325 30Apr18     948MSG</span><span style="left:355.5px">software vs hardware</span><span style="left:565.5px"><i class="ab">&lt;</i>W<i class="ab">&gt;</i></span></div>
<div class="row mono R" style="top:276px"><span style="left:2px">5A2</span><span style="left:62px">D PY4ZBZ</span><span style="left:132px">ST2NH</span><span style="left:187px">2145 30Apr18     483MSG</span><span style="left:355.5px">HI OM</span><span style="left:565.5px"><i class="ab">&lt;</i>W<i class="ab">&gt;</i></span></div>
<div class="row mono K" style="top:288px"><span style="left:2px">583</span><span style="left:62px">D EA6WQ</span><span style="left:132px">ST2NH</span><span style="left:187px">0033 29Apr18    1736   </span><span style="left:355.5px">Re: switches</span><span style="left:565.5px"><i class="ab">&lt;</i>W<i class="ab">&gt;</i></span></div>
<div class="row mono K" style="top:300px"><span style="left:2px">56E</span><span style="left:62px">D ALL</span><span style="left:132px">ST2NH</span><span style="left:187px">2331 27Apr18   92975   </span><span style="left:355.5px">missing msg</span><span style="left:565.5px"><i class="ab">&lt;</i>W<i class="ab">&gt;</i></span></div>
<div class="row mono K" style="top:312px"><span style="left:2px">56D</span><span style="left:62px">D ALL</span><span style="left:132px">JE1CVL</span><span style="left:187px">2218 27Apr18     318MSG</span><span style="left:355.5px">Hello</span><span style="left:565.5px"><i class="ab">&lt;</i>W<i class="ab">&gt;</i></span></div>
<div class="row mono K" style="top:324px"><span style="left:2px">55E</span><span style="left:62px">D ALL</span><span style="left:132px">ST2NH</span><span style="left:187px">0006 27Apr18   84054   </span><span style="left:355.5px">switches</span><span style="left:565.5px"><i class="ab">&lt;</i>W<i class="ab">&gt;</i></span></div>
<div class="row mono K" style="top:336px"><span style="left:2px">54A</span><span style="left:62px">D </span><span style="left:132px"></span><span style="left:187px">1817 25Apr18    4927   </span><span style="left:355.5px">WE042506</span></div>
<div class="row mono K" style="top:348px"><span style="left:2px">549</span><span style="left:62px">D KC9ELU</span><span style="left:132px">KE0LX</span><span style="left:187px">1541 25Apr18     339MSG</span><span style="left:355.5px">morning</span></div>
<div class="row mono K" style="top:360px"><span style="left:2px">546</span><span style="left:62px">D EA6WQ</span><span style="left:132px">G8TZJ</span><span style="left:187px">0923 25Apr18     666MSG</span><span style="left:355.5px">Re: Two Calls Simultaneously</span></div>
<div class="row mono K" style="top:372px"><span style="left:2px">52F</span><span style="left:62px">D PYZBZ</span><span style="left:132px">ST2NH</span><span style="left:187px">0148 24Apr18     617MSG</span><span style="left:355.5px">THANKS OM</span><span style="left:565.5px"><i class="ab">&lt;</i>W<i class="ab">&gt;</i></span></div>
<div class="row mono K" style="top:384px"><span style="left:2px">525</span><span style="left:62px">D </span><span style="left:132px"></span><span style="left:187px">1741 23Apr18    4927   </span><span style="left:355.5px">WE042306</span></div>
<div class="row mono K" style="top:396px"><span style="left:2px">522</span><span style="left:62px">D G8TZJ</span><span style="left:132px">KE0KQT</span><span style="left:187px">0856 23Apr18     420MSG</span><span style="left:355.5px">TWO CALLS</span><span style="left:565.5px">ALL</span></div>
<div class="row mono K" style="top:408px"><span style="left:2px">516</span><span style="left:62px">D </span><span style="left:132px"></span><span style="left:187px">1833 22Apr18    4927   </span><span style="left:355.5px">WE042207</span></div>
<div class="row mono K" style="top:420px"><span style="left:2px">513</span><span style="left:62px">D TEST</span><span style="left:132px">EB2AT</span><span style="left:187px">1110 22Apr18     232MSG</span><span style="left:355.5px">TEST FILE TIPE = 8</span><span style="left:565.5px">KEPS</span></div>
<div class="row mono R" style="top:432px"><span style="left:2px">512</span><span style="left:62px">D PY4ZBZ</span><span style="left:132px">EA1JM</span><span style="left:187px">1107 22Apr18     437MSG</span><span style="left:355.5px">Re: Hi from Brazil</span><span style="left:565.5px"><i class="ab">&lt;</i>W<i class="ab">&gt;</i></span></div>
<div class="row mono B" style="top:444px"><span style="left:2px">504</span><span style="left:62px">D ST2NH</span><span style="left:132px">PY4ZBZ</span><span style="left:187px">1958 21Apr18   20475   </span><span style="left:355.5px">QSL from ATX-1</span><span style="left:565.5px">PY4ZBZ</span></div>
<div class="row mono K" style="top:456px"><span style="left:2px">503</span><span style="left:62px">D </span><span style="left:132px"></span><span style="left:187px">2143 21Apr18    4927   </span><span style="left:355.5px">WE042108</span></div>
<div class="row mono K" style="top:468px"><span style="left:2px">502</span><span style="left:62px">D </span><span style="left:132px"></span><span style="left:187px">1924 21Apr18    4927   </span><span style="left:355.5px">WE042107</span></div>
<div class="row mono K" style="top:480px"><span style="left:2px">4FE</span><span style="left:62px">D TEST</span><span style="left:132px">EB2AT</span><span style="left:187px">1007 21Apr18     455MSG</span><span style="left:355.5px">Keps auto update test</span><span style="left:565.5px">KEPS</span></div>
<div class="row mono K" style="top:492px"><span style="left:2px">4FD</span><span style="left:62px">D EA1JM</span><span style="left:132px">G8TZJ</span><span style="left:187px">1003 21Apr18     556MSG</span><span style="left:355.5px">Re: Stations on Falconsat-3</span></div>
<div class="row mono K" style="top:504px"><span style="left:2px">4FC</span><span style="left:62px">D EA6WQ</span><span style="left:132px">G8TZJ</span><span style="left:187px">1002 21Apr18     522MSG</span><span style="left:355.5px">Re: Tnx for QSL  ||</span></div>
<div class="row mono K" style="top:516px"><span style="left:2px">4FB</span><span style="left:62px">D TEST</span><span style="left:132px">EB2AT</span><span style="left:187px">0824 21Apr18     448MSG</span><span style="left:355.5px">Keps auto update test</span></div>
<div class="row mono K" style="top:528px"><span style="left:2px">4EF</span><span style="left:62px">D EA6WQ</span><span style="left:132px">KC9ELU</span><span style="left:187px">1516 20Apr18     633MSG</span><span style="left:355.5px">Re: P/ TEST</span></div>
<div class="row mono K" style="top:540px"><span style="left:2px">4ED</span><span style="left:62px">D ALL</span><span style="left:132px">EA6WQ</span><span style="left:187px">1220 20Apr18     339MSG</span><span style="left:355.5px">P/ TEST</span><span style="left:565.5px"><i class="ab">&lt;</i>W<i class="ab">&gt;</i> PORTABLE</span></div>
<div class="row mono K" style="top:552px"><span style="left:2px">4E0</span><span style="left:62px">D </span><span style="left:132px"></span><span style="left:187px">1632 19Apr18    4927   </span><span style="left:355.5px">WE041906</span></div>
<div class="row mono K" style="top:564px"><span style="left:2px">4DD</span><span style="left:62px">D ALL</span><span style="left:132px">EA6WQ</span><span style="left:187px">0935 19Apr18     482MSG</span><span style="left:355.5px">FSAT-3 PORTABLE</span><span style="left:565.5px">ALL</span></div>
<div class="row mono K" style="top:576px"><span style="left:2px">4DC</span><span style="left:62px">D G8TZJ</span><span style="left:132px">EA6WQ</span><span style="left:187px">0935 19Apr18     429MSG</span><span style="left:355.5px">Tnx for QSL  ||</span><span style="left:565.5px">ALL</span></div>
<div class="row mono K" style="top:588px"><span style="left:2px">4DB</span><span style="left:62px">D N6RFM</span><span style="left:132px">EA6WQ</span><span style="left:187px">0935 19Apr18     424MSG</span><span style="left:355.5px">Tnx QSL |</span><span style="left:565.5px">ALL</span></div>
<div class="row mono R" style="top:600px"><span style="left:2px">4D9</span><span style="left:62px">D PY4ZBZ</span><span style="left:132px">EA6WQ</span><span style="left:187px">0935 19Apr18     396MSG</span><span style="left:355.5px">Hi Ron ...</span><span style="left:565.5px">ALL</span></div>
<div class="row mono K" style="top:612px"><span style="left:2px">4D8</span><span style="left:62px">D EA4SG</span><span style="left:132px">EA6WQ</span><span style="left:187px">0935 19Apr18     394MSG</span><span style="left:355.5px">Tnx QSL  !!</span><span style="left:565.5px">ALL</span></div>
<div class="row mono K" style="top:624px"><span style="left:2px">4D7</span><span style="left:62px">D ST2NH</span><span style="left:132px">EA6WQ</span><span style="left:187px">0935 19Apr18     393MSG</span><span style="left:355.5px">Hi Nader ..</span><span style="left:565.5px">ALL</span></div>
</div>
<div class="a dither" style="left:712px;top:96px;width:17px;height:649px"></div>
<div style="position:absolute;left:712px;top:96px;width:17px;height:17px;background:#696969"><div style="position:absolute;left:0;top:0;width:16px;height:16px;background:#E3E3E3"></div><div style="position:absolute;left:1px;top:1px;width:15px;height:15px;background:#A0A0A0"></div><div style="position:absolute;left:1px;top:1px;width:14px;height:14px;background:#FFFFFF"></div><div style="position:absolute;left:2px;top:2px;width:13px;height:13px;background:#F0F0F0"></div></div>
<svg class="a" style="left:717px;top:102px" width="7" height="4" shape-rendering="crispEdges"><path d="M3 0h1v1H3zM2 1h3v1H2zM1 2h5v1H1zM0 3h7v1H0z"/></svg>
<div style="position:absolute;left:712px;top:113px;width:17px;height:17px;background:#696969"><div style="position:absolute;left:0;top:0;width:16px;height:16px;background:#E3E3E3"></div><div style="position:absolute;left:1px;top:1px;width:15px;height:15px;background:#A0A0A0"></div><div style="position:absolute;left:1px;top:1px;width:14px;height:14px;background:#FFFFFF"></div><div style="position:absolute;left:2px;top:2px;width:13px;height:13px;background:#F0F0F0"></div></div>
<div style="position:absolute;left:712px;top:728px;width:17px;height:17px;background:#696969"><div style="position:absolute;left:0;top:0;width:16px;height:16px;background:#E3E3E3"></div><div style="position:absolute;left:1px;top:1px;width:15px;height:15px;background:#A0A0A0"></div><div style="position:absolute;left:1px;top:1px;width:14px;height:14px;background:#FFFFFF"></div><div style="position:absolute;left:2px;top:2px;width:13px;height:13px;background:#F0F0F0"></div></div>
<svg class="a" style="left:717px;top:735px" width="7" height="4" shape-rendering="crispEdges"><path d="M0 0h7v1H0zM1 1h5v1H1zM2 2h3v1H2zM3 3h1v1H3z"/></svg>
<div class="a dither" style="left:6px;top:745px;width:707px;height:17px"></div>
<div style="position:absolute;left:6px;top:745px;width:17px;height:17px;background:#696969"><div style="position:absolute;left:0;top:0;width:16px;height:16px;background:#E3E3E3"></div><div style="position:absolute;left:1px;top:1px;width:15px;height:15px;background:#A0A0A0"></div><div style="position:absolute;left:1px;top:1px;width:14px;height:14px;background:#FFFFFF"></div><div style="position:absolute;left:2px;top:2px;width:13px;height:13px;background:#F0F0F0"></div></div>
<svg class="a" style="left:11px;top:750px" width="4" height="7" shape-rendering="crispEdges"><path d="M3 0h1v7H3zM2 1h1v5H2zM1 2h1v3H1zM0 3h1v1H0z"/></svg>
<div style="position:absolute;left:23px;top:745px;width:17px;height:17px;background:#696969"><div style="position:absolute;left:0;top:0;width:16px;height:16px;background:#E3E3E3"></div><div style="position:absolute;left:1px;top:1px;width:15px;height:15px;background:#A0A0A0"></div><div style="position:absolute;left:1px;top:1px;width:14px;height:14px;background:#FFFFFF"></div><div style="position:absolute;left:2px;top:2px;width:13px;height:13px;background:#F0F0F0"></div></div>
<div style="position:absolute;left:696px;top:745px;width:17px;height:17px;background:#696969"><div style="position:absolute;left:0;top:0;width:16px;height:16px;background:#E3E3E3"></div><div style="position:absolute;left:1px;top:1px;width:15px;height:15px;background:#A0A0A0"></div><div style="position:absolute;left:1px;top:1px;width:14px;height:14px;background:#FFFFFF"></div><div style="position:absolute;left:2px;top:2px;width:13px;height:13px;background:#F0F0F0"></div></div>
<svg class="a" style="left:703px;top:750px" width="4" height="7" shape-rendering="crispEdges"><path d="M0 0h1v7H0zM1 1h1v5H1zM2 2h1v3H2zM3 3h1v1H3z"/></svg>
<div class="a" style="left:0;top:762px;width:735px;height:1px;background:#7BB8F8"></div>
<div class="a" style="left:734px;top:0;width:1px;height:763px;background:#7BB8F8"></div></body></html>
